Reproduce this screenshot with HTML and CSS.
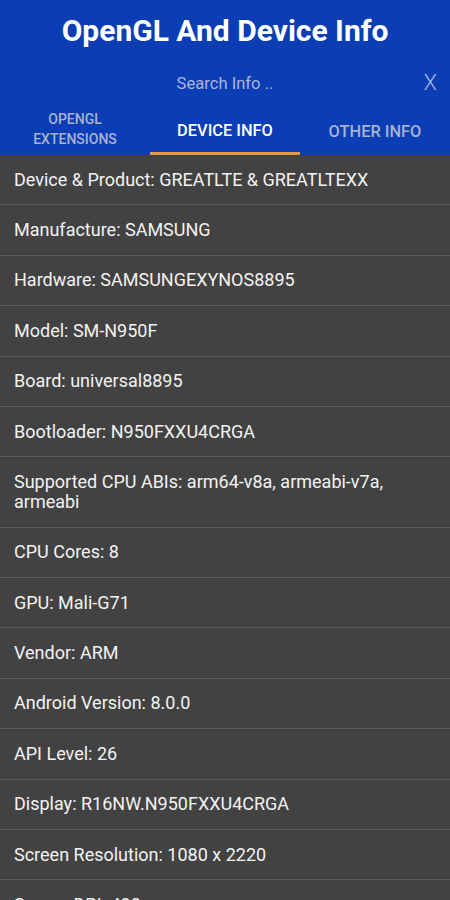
FILE: index.html
```html
<!DOCTYPE html>
<html>
<head>
<meta charset="utf-8">
<link rel="stylesheet" href="styles.css">
</head>
<body>
<div class="app">
  <header class="header">
    <h1 class="title">OpenGL And Device Info</h1>
    <div class="search">
      <span class="search-text">Search Info ..</span>
      <span class="search-clear">X</span>
    </div>
    <nav class="tabs">
      <div class="tab small">OPENGL<br>EXTENSIONS</div>
      <div class="tab active">DEVICE INFO</div>
      <div class="tab">OTHER INFO</div>
    </nav>
  </header>
  <ul class="list">
    <li class="row">Device &amp; Product: GREATLTE &amp; GREATLTEXX</li>
    <li class="row">Manufacture: SAMSUNG</li>
    <li class="row">Hardware: SAMSUNGEXYNOS8895</li>
    <li class="row">Model: SM-N950F</li>
    <li class="row">Board: universal8895</li>
    <li class="row">Bootloader: N950FXXU4CRGA</li>
    <li class="row">Supported CPU ABIs: arm64-v8a, armeabi-v7a, armeabi</li>
    <li class="row">CPU Cores: 8</li>
    <li class="row">GPU: Mali-G71</li>
    <li class="row">Vendor: ARM</li>
    <li class="row">Android Version: 8.0.0</li>
    <li class="row">API Level: 26</li>
    <li class="row">Display: R16NW.N950FXXU4CRGA</li>
    <li class="row">Screen Resolution: 1080 x 2220</li>
    <li class="row">Screen DPI: 420</li>
  </ul>
</div>
</body>
</html>
```
FILE: styles.css
```css
* { box-sizing: border-box; }
html, body { margin: 0; padding: 0; }
body {
  width: 450px;
  height: 900px;
  overflow: hidden;
  background: #424242;
  font-family: Roboto, "Noto Sans", sans-serif;
}
.app { display: flex; flex-direction: column; }
.header {
  background: #0b3db5;
  display: flex;
  flex-direction: column;
}
.title {
  margin: 0;
  height: 62px;
  display: flex;
  align-items: center;
  justify-content: center;
  color: #ffffff;
  font-size: 30px;
  font-weight: 700;
  padding-bottom: 1px;
}
.search {
  height: 42px;
  display: flex;
  align-items: center;
  justify-content: center;
  position: relative;
}
.search-text {
  color: #aab6d8;
  font-size: 16.6px;
}
.search-clear {
  position: absolute;
  right: 13px;
  top: 8px;
  color: #aab6d8;
  font-size: 22px;
  font-weight: 300;
}
.tabs {
  display: grid;
  grid-template-columns: repeat(3, 1fr);
  height: 51px;
}
.tab {
  display: flex;
  align-items: center;
  justify-content: center;
  text-align: center;
  color: #a9b3cf;
  font-size: 16.4px;
  font-weight: 500;
  line-height: 20px;
  padding-top: 4px;
}
.tab.small {
  font-size: 14px;
  line-height: 20px;
  padding-top: 0;
  padding-bottom: 2px;
}
.tab.active {
  color: #ffffff;
  border-bottom: 3px solid #e39a45;
  padding-top: 6px;
}
.list {
  list-style: none;
  margin: 0;
  padding: 0;
}
.row {
  color: #f2f2f2;
  font-size: 18px;
  line-height: 20px;
  padding: 14.7px 40px 14.7px 14px;
  border-bottom: 1px solid #5a5a5a;
}
```
